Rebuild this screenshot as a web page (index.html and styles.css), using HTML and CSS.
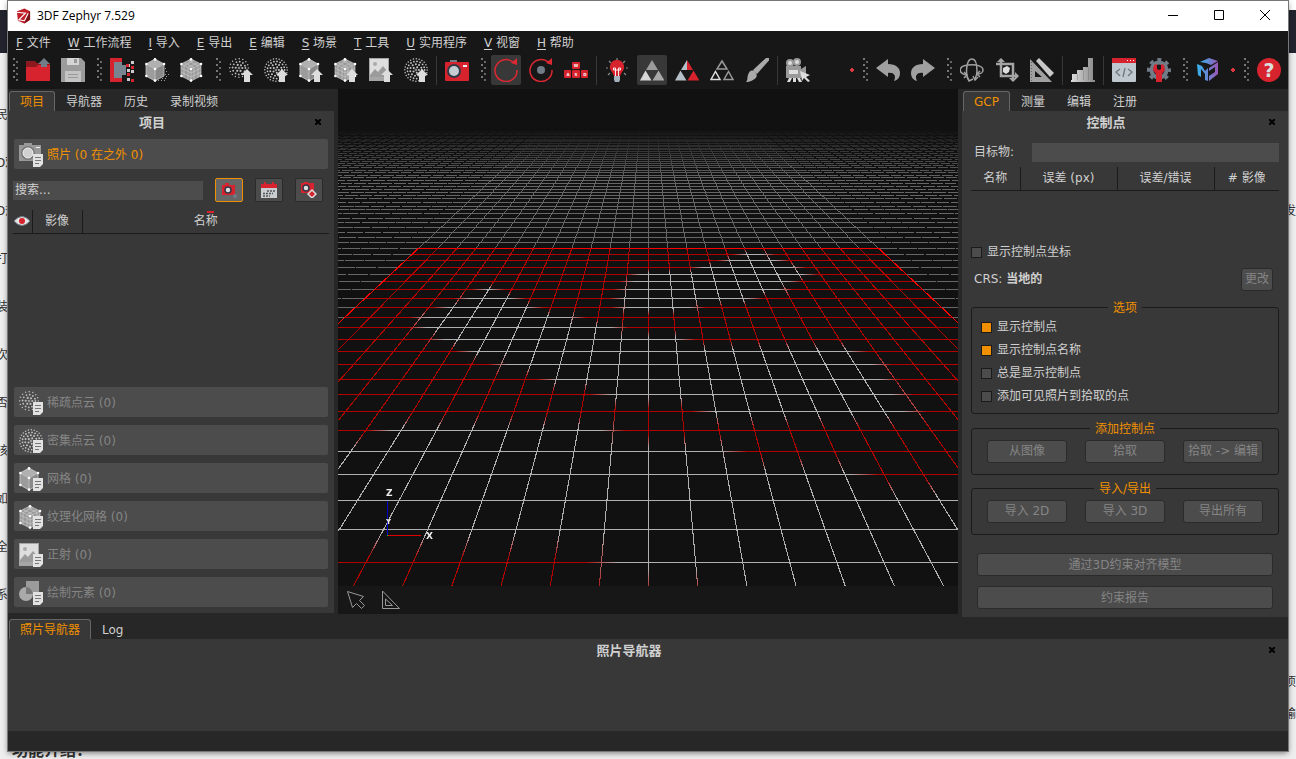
FILE: index.html
```html
<!DOCTYPE html>
<html lang="zh-CN">
<head>
    <meta charset="UTF-8">
    <meta name="viewport" content="width=device-width, initial-scale=1.0">
    <title>3DF Zephyr 7.529</title>
    <link rel="stylesheet" href="styles.css">
</head>
<body>
    <svg class="sprite" aria-hidden="true">
        <defs>
            <linearGradient id="mgrad" x1="0" x2="1"><stop offset="0" stop-color="#35b6ee"/><stop offset="1" stop-color="#9a55b5"/></linearGradient>
            <linearGradient id="steel" x1="0" x2="1"><stop offset="0" stop-color="#ddd"/><stop offset="1" stop-color="#888"/></linearGradient>
        </defs>
        <symbol id="up" viewBox="0 0 24 24"><path fill="#ddd" d="M18 11l6 6h-3v7h-6v-7h-3z"/></symbol>
        <symbol id="page" viewBox="0 0 24 24"><path fill="#e2e2e2" d="M14 11h10v10l-3 3h-7z"/><path stroke="#777" d="M16 14.5h6M16 17.500h6M16 20.500h4"/></symbol>
        <symbol id="folder" viewBox="0 0 24 24"><path fill="#8d1920" d="M0 3h9l2 2h13v7H0z"/><path fill="#d6232d" d="M0 9h10l2-2h12v16H0z"/><path fill="#727c88" d="M18 0l6 6h-3v3h-6V6h-3z"/></symbol>
        <symbol id="save" viewBox="0 0 24 24"><path fill="#9c9c9c" d="M0 0h20l4 4v20H0z"/><path fill="#d5d5d5" d="M6 0h12v7H6z"/><path fill="#c4c4c4" d="M4 13h16v11H4z"/><path fill="#999" d="M13 1h3v4h-3z"/><path stroke="#999" d="M7 16.500h10M7 19.500h10"/></symbol>
        <symbol id="split" viewBox="0 0 24 24"><path fill="#d6232d" d="M0 0h12v4H4v16h8v4H0z"/><path fill="#788490" d="M4 4h8v3h4v10h-4v3H4z"/><path fill="#ccc" d="M17 6h3v3h-3zM21 3h3v3h-3zM17 11h3v3h-3zM21 12h3v3h-3zM17 20h3v3h-3z"/><path fill="#d6232d" d="M16 6h3v3h-3zM21 8h3v3h-3zM17 15h3v3h-3zM21 21h3v3h-3z"/></symbol>
        <symbol id="cube" viewBox="0 0 24 24"><path fill="#b0b0b0" d="M10 1l9 5-9 5-9-5z"/><path fill="#9c9c9c" d="M1 6l9 5v12l-9-5z"/><path fill="#8a8a8a" d="M19 6l-9 5v12l9-5z"/><path fill="none" stroke="#c8c8c8" stroke-width=".8" d="M10 1l9 5v12l-9 5-9-5V6zM1 6l9 5 9-5M10 11v12"/><g fill="#fff"><circle cx="10" cy="1.400" r="1.300"/><circle cx="1.400" cy="6" r="1.300"/><circle cx="19" cy="6" r="1.300"/><circle cx="10" cy="11" r="1.300"/><circle cx="1.400" cy="18" r="1.300"/><circle cx="10" cy="22.600" r="1.300"/></g></symbol>
        <symbol id="dust" viewBox="0 0 24 24"><path stroke="#999" stroke-dasharray="1 2" d="M20 10.500h3M18 13.500h6M17 16.500h7M15 18.500h9M14 20.500h9M13 22.500h8"/></symbol>
        <symbol id="texcube" viewBox="0 0 24 24"><path fill="#999" d="M11 1l10 5v12l-10 5-10-5V6z"/><path fill="none" stroke="#c8c8c8" stroke-width=".7" d="M11 1l10 5v12l-10 5-10-5V6zM1 6l10 5 10-5M11 11v12M1 10l10 5 10-5M1 14l10 5 10-5M4 4.500l10 5v12M8 2.500l10 5v12M18 4.500l-10 5v12M14 2.500l-10 5v12"/><g fill="#fff"><circle cx="11" cy="1.400" r="1.400"/><circle cx="1.400" cy="6" r="1.300"/><circle cx="21" cy="6" r="1.300"/><circle cx="11" cy="11" r="1.300"/><circle cx="1.400" cy="18" r="1.300"/><circle cx="21" cy="18" r="1.300"/><circle cx="11" cy="22.600" r="1.300"/></g></symbol>
        <symbol id="sparse" viewBox="0 0 24 24"><g fill="none" stroke="#bbb" stroke-linecap="round"><circle cx="10" cy="10" r="9.300" stroke-width="1.500" stroke-dasharray="0 3.650"/><circle cx="10" cy="10" r="6.400" stroke-width="1.900" stroke-dasharray="0 3.350"/><circle cx="10" cy="10" r="3.300" stroke-width="2.200" stroke-dasharray="0 3.450"/><circle cx="10" cy="10" r=".3" stroke-width="2"/></g></symbol>
        <symbol id="dense" viewBox="0 0 24 24"><g fill="none" stroke="#c4c4c4" stroke-linecap="round"><circle cx="12" cy="12" r="11.200" stroke-width="1.500" stroke-dasharray="0 2.930"/><circle cx="12" cy="12" r="8.600" stroke-width="1.800" stroke-dasharray="0 3.180"/><circle cx="12" cy="12" r="5.800" stroke-width="2" stroke-dasharray="0 3.310"/><circle cx="12" cy="12" r="2.900" stroke-width="2.100" stroke-dasharray="0 3.640"/><circle cx="12" cy="12" r=".3" stroke-width="2"/></g></symbol>
        <symbol id="image" viewBox="0 0 24 24"><path fill="#a6a6a6" d="M0 0h20v23H0z"/><path fill="#dedede" d="M1 1h18v16H1z"/><circle cx="6" cy="6" r="2" fill="#aaa"/><path fill="#9b9b9b" d="M1 17l5-6 3 3 5-6 5 6v5H1z"/></symbol>
        <symbol id="camera" viewBox="0 0 24 24"><path fill="#727c88" d="M5 2h7v3H5z"/><rect y="4" width="24" height="19" rx="1" fill="#d6232d"/><path fill="#eee" d="M18 7h4v2h-4z"/><circle cx="9" cy="13" r="7" fill="#313947"/><circle cx="9" cy="13" r="5" fill="#c5cdd3"/></symbol>
        <symbol id="graycamera" viewBox="0 0 24 24"><path fill="#999" d="M5 0h8v2h9v16H0V2h5z"/><path fill="#eee" d="M17 4h4v1h-4z"/><circle cx="9" cy="10" r="7" fill="#777"/><circle cx="9" cy="10" r="5" fill="#d0d0d0" stroke="#f0f0f0"/></symbol>
        <symbol id="orbit" viewBox="0 0 24 24"><path fill="none" stroke="#dc2832" stroke-width="1.500" d="M20 5A11 11 0 1 0 23 12"/><path fill="#dc2832" d="M23 0v7l-6-2z"/></symbol>
        <symbol id="wasd" viewBox="0 0 24 24"><g fill="#d6232d"><rect x="8" y="4" width="8" height="7" rx="1"/><rect y="12" width="7" height="8" rx="1"/><rect x="8" y="12" width="8" height="8" rx="1"/><rect x="17" y="12" width="7" height="8" rx="1"/></g><g fill="#fff" font-family="DejaVu Sans" font-size="4" font-weight="bold" text-anchor="middle"><text x="12" y="9">W</text><text x="4" y="18">A</text><text x="12" y="18">S</text><text x="21" y="18">D</text></g></symbol>
        <symbol id="bulb" viewBox="0 0 24 24"><path stroke="#888" stroke-width="1.200" d="M12 0v2M4 3l2 2M20 3l-2 2M1 10h2M21 10h2M3 17l2-2M21 17l-2-2"/><path fill="#d6232d" d="M12 2a7 7 0 0 0-5 12l2 4h6l2-4a7 7 0 0 0-5-12z"/><path fill="none" stroke="#fff" stroke-width=".9" d="M10.500 18v-8h-2v2h7v-2h-2v8"/><path fill="#a5b1bc" d="M9 18h6v4l-1 2h-4l-1-2z"/></symbol>
        <symbol id="tri" viewBox="0 0 24 24"><path fill="#9b9b9b" d="M12 2l6 10H6z"/><path fill="#d8d8d8" d="M5.500 12.500l6 10H0z"/><path fill="#a8a8a8" d="M18.500 12.500l6 10h-12z"/></symbol>
        <symbol id="tricolor" viewBox="0 0 24 24"><path fill="#b5bfc7" d="M12 2v10H6zM5.500 12.500l6 10H0z"/><path fill="#d6232d" d="M12 2l6 10h-6zM18.500 12.500l6 10h-12z"/></symbol>
        <symbol id="triline" viewBox="0 0 24 24"><g fill="none" stroke-width="1.500"><path stroke="#999" d="M12 3l5 8H7zM18.500 13.500l4.500 8h-9z"/><path stroke="#ddd" d="M5.500 13.500l4.500 8H1z"/></g></symbol>
        <symbol id="brush" viewBox="0 0 24 24"><path fill="#aaa" d="M21 0l3-.1v2.500L12 16l-4-4zM1 24c2-2 1-4 2-7 1-4 4-6 7-3 3 3 2 6-2 8s-5 2-7 2z"/></symbol>
        <symbol id="movie" viewBox="0 0 24 24"><g fill="#999"><circle cx="4" cy="5" r="4"/><circle cx="11" cy="4" r="4"/><path d="M0 8h15v3l5-3v11l-5-3v4H0z"/></g><path fill="#ddd" d="M3 12h9v4H3zM3 20h3l-2 4H1zM7 20h3v4H7zM11 20h3l2 4h-3z"/><path fill="#ddd" d="M14 13l10 4-4 2 4 4-2 1-4-4-2 3z"/><circle cx="4" cy="5" r="2" fill="#ddd"/><circle cx="11" cy="4" r="2" fill="#ddd"/></symbol>
        <symbol id="undo" viewBox="0 0 24 24"><path fill="#a0a0a0" d="M0 10L12 1v5c8 0 12 4 12 9 0 4-2 7-6 8 3-6-1-9-6-8v4z"/></symbol>
        <symbol id="orbit3d" viewBox="0 0 24 24"><g fill="none" stroke="#a2a2a2" stroke-width="1.500"><path d="M6 17C-2 15-2 8 8 7c8-1 15 1 15 5 0 2-2 4-5 4M9 22C5 17 6 1 12 1c4 0 5 5 5 12 0 3-1 6-2 8"/><path d="M4 14l3 3-3 3M7 19l2 4 4-2M20 13l-3 3 3 3M13 18l2 4 3-3"/></g></symbol>
        <symbol id="crop" viewBox="0 0 24 24"><path fill="none" stroke="#a5a5a5" stroke-width="2.500" d="M6 1v17h17M1 6h17v17"/><path fill="#a5a5a5" d="M6 0l4 4H2zM24 18l-4 4v-8zM18 24l-4-4h8z"/><path fill="#ddd" d="M8 10l4-2 3 2-1 4-3 2-3-2z"/></symbol>
        <symbol id="rulers" viewBox="0 0 24 24"><path fill="#a0a0a0" fill-rule="evenodd" d="M0 1l22 23H0zM5 13v6h7z"/><path fill="#c8c8c8" d="M9 0l15 15-4 4L6 3z"/><path stroke="#666" stroke-dasharray="1 2" d="M1.500 4v19"/></symbol>
        <symbol id="stairs" viewBox="0 0 24 24"><path fill="url(#steel)" d="M0 24v-2h1v-6h5v-4h6V9h5V0h5v22h2v2z"/><path fill="#555" d="M6 16h1v6H6zM12 12h1v10h-1zM17 9h1v13h-1z" opacity=".3"/></symbol>
        <symbol id="code" viewBox="0 0 24 24"><rect width="24" height="24" rx="1" fill="#c0c8cf"/><path fill="#d6232d" d="M0 0h24v5H0z"/><path fill="#fff" d="M15 2h1v1h-1zM18 2h1v1h-1zM21 2h1v1h-1z"/><path fill="none" stroke="#6d7782" stroke-width="1.300" d="M8 11l-4 3 4 4M16 11l4 3-4 4M13 10l-2 9"/></symbol>
        <symbol id="gear" viewBox="0 0 24 24"><circle cx="12" cy="12" r="7.500" fill="none" stroke="#727c88" stroke-width="4"/><circle cx="12" cy="12" r="10.500" fill="none" stroke="#727c88" stroke-width="3" stroke-dasharray="4.100 4.140" stroke-dashoffset="2"/><path fill="#d6232d" d="M7 7l3-1v5l2 1 2-1V6l3 1 1 5-3 4v8H9v-8l-3-4z"/></symbol>
        <symbol id="mcube" viewBox="0 0 24 24"><g fill="url(#mgrad)"><path d="M4 4l9-4 9 3-7 4-5-2z"/><path fill-rule="evenodd" d="M1 6l5 2 3 5 3-3v13l-3-1v-6l-4-5v8l-3-2zM13 10l9-6v12l-9 7v-5l6-4V9l-6 4z"/></g></symbol>
        <symbol id="help" viewBox="0 0 24 24"><circle cx="12" cy="12" r="12" fill="#d6232d"/><text x="12" y="19" fill="#ddd" font-family="DejaVu Sans" font-size="19" font-weight="bold" text-anchor="middle">?</text></symbol>
        <symbol id="shapes" viewBox="0 0 24 24"><path fill="#9b9b9b" d="M7 0h13v14H7z"/><circle cx="7" cy="13" r="7" fill="#aaa"/><path fill="#777" d="M7 6c4 0 6 3 7 7H7z"/></symbol>
    </svg>

    <!-- page showing around the window edges -->
    <div class="backdrop">
        <div class="behind-left"><span>民</span><span>D观</span><span>D规</span><span>打</span><span>装</span><span>次</span><span>否</span><span>核</span><span>如</span><span>全</span><span>系</span></div>
        <div class="behind-right"><span class="r1">发</span><span class="r2">项</span><span class="r3">输</span></div>
        <strong class="behind-title">功能介绍：</strong>
    </div>

    <div class="window">
        <header class="titlebar">
            <svg class="logo" viewBox="0 0 16 16"><path fill="#c01e29" d="M1 3l8-3 6 3v9l-6 4-7-3z"/><path fill="#7c1219" d="M13 5l2-2v9l-6 4z"/><path fill="none" stroke="#fff" stroke-width="1.200" d="M1 4l9 1-7 7 6 1 4-8"/></svg>
            <span>3DF Zephyr 7.529</span>
            <div class="window-buttons">
                <button aria-label="最小化"><svg viewBox="0 0 10 10"><path d="M0 5.500h10"/></svg></button>
                <button aria-label="最大化"><svg viewBox="0 0 10 10"><path d="M.5.5h9v9h-9z"/></svg></button>
                <button aria-label="关闭"><svg viewBox="0 0 10 10"><path d="M0 0l10 10M10 0L0 10"/></svg></button>
            </div>
        </header>

        <nav class="menubar">
            <button><u>F</u> 文件</button>
            <button><u>W</u> 工作流程</button>
            <button><u>I</u> 导入</button>
            <button><u>E</u> 导出</button>
            <button><u>E</u> 编辑</button>
            <button><u>S</u> 场景</button>
            <button><u>T</u> 工具</button>
            <button><u>U</u> 实用程序</button>
            <button><u>V</u> 视窗</button>
            <button><u>H</u> 帮助</button>
        </nav>

        <div class="toolbar">
            <i class="handle"></i>
            <button><svg><use href="#folder"/></svg></button>
            <button><svg><use href="#save"/></svg></button>
            <i class="handle"></i>
            <button><svg><use href="#split"/></svg></button>
            <button><svg><use href="#cube"/><use href="#dust"/></svg></button>
            <button><svg><use href="#texcube"/></svg></button>
            <i class="handle"></i>
            <button><svg><use href="#sparse"/><use href="#up"/></svg></button>
            <button><svg><use href="#dense"/><use href="#up"/></svg></button>
            <button><svg><use href="#cube"/><use href="#up"/></svg></button>
            <button><svg><use href="#texcube"/><use href="#up"/></svg></button>
            <button><svg><use href="#image"/><use href="#up"/></svg></button>
            <button><svg><use href="#dense"/><use href="#up"/></svg></button>
            <i class="sep"></i>
            <button><svg><use href="#camera"/></svg></button>
            <i class="handle"></i>
            <button class="active"><svg><use href="#orbit"/></svg></button>
            <button><svg viewBox="0 0 24 24"><use href="#orbit"/><circle cx="12" cy="12" r="4" fill="#727c88"/></svg></button>
            <button><svg><use href="#wasd"/></svg></button>
            <i class="sep"></i>
            <button><svg><use href="#bulb"/></svg></button>
            <button class="active"><svg><use href="#tri"/></svg></button>
            <button><svg><use href="#tricolor"/></svg></button>
            <button><svg><use href="#triline"/></svg></button>
            <button><svg><use href="#brush"/></svg></button>
            <i class="sep"></i>
            <button><svg><use href="#movie"/></svg></button>
            <i class="dot far"></i>
            <i class="handle"></i>
            <button><svg><use href="#undo"/></svg></button>
            <button><svg class="flip"><use href="#undo"/></svg></button>
            <i class="handle"></i>
            <button><svg><use href="#orbit3d"/></svg></button>
            <button><svg><use href="#crop"/></svg></button>
            <button><svg><use href="#rulers"/></svg></button>
            <i class="sep"></i>
            <button><svg><use href="#stairs"/></svg></button>
            <i class="sep"></i>
            <button><svg><use href="#code"/></svg></button>
            <button><svg><use href="#gear"/></svg></button>
            <i class="handle"></i>
            <button><svg><use href="#mcube"/></svg></button>
            <i class="dot"></i>
            <i class="handle"></i>
            <button><svg><use href="#help"/></svg></button>
        </div>

        <main class="main">
            <section class="dock project">
                <div class="tabs"><button class="on">项目</button><button>导航器</button><button>历史</button><button>录制视频</button></div>
                <div class="panel">
                    <div class="panel-head"><h2>项目</h2><button class="close" aria-label="关闭"><svg viewBox="0 0 6 6"><path d="M0 0l6 6M6 0L0 6"/></svg></button></div>
                    <button class="item current"><svg><use href="#graycamera"/><use href="#page"/></svg>照片 (0 在之外 0)</button>
                    <div class="search">
                        <input type="text" placeholder="搜索..." aria-label="搜索">
                        <button class="on"><svg viewBox="0 0 16 16"><path fill="#d6232d" d="M1 3h3V1h4v2h6v10H1z"/><circle cx="7" cy="8" r="3" fill="#ddd" stroke="#313947" stroke-width="1.500"/><circle cx="14" cy="14" r="2" fill="#727c88"/></svg></button>
                        <button><svg viewBox="0 0 16 16"><path fill="#c8cdd2" d="M0 2h16v14H0z"/><path fill="#d6232d" d="M0 2h3V0h2v2h6V0h2v2h3v4H0z"/><path stroke="#555" stroke-width="1.500" stroke-dasharray="2 1" d="M6 9h8M2 11.500h10M2 14h7"/></svg></button>
                        <button><svg viewBox="0 0 16 16"><path fill="#d6232d" d="M0 1h3V0h4v1h6v10H0z"/><circle cx="5" cy="6" r="3" fill="#ddd" stroke="#313947" stroke-width="1.500"/><path fill="#d6232d" stroke="#ddd" stroke-width="1.500" d="M11 8l4 4-4 4-4-4z"/></svg></button>
                    </div>
                    <table class="list photos">
                        <thead><tr>
                            <th><svg class="eye" viewBox="0 0 16 10"><path fill="#e4e4e4" stroke="#727c88" d="M0 5q8-9 16 0-8 9-16 0z"/><circle cx="8" cy="5" r="3" fill="#d6232d"/></svg></th>
                            <th>影像</th>
                            <th class="sorted">名称</th>
                        </tr></thead>
                    </table>
                    <div class="items">
                        <button class="item" disabled><svg><use href="#sparse"/><use href="#page"/></svg>稀疏点云 (0)</button>
                        <button class="item" disabled><svg><use href="#dense"/><use href="#page"/></svg>密集点云 (0)</button>
                        <button class="item" disabled><svg><use href="#cube"/><use href="#page"/></svg>网格 (0)</button>
                        <button class="item" disabled><svg><use href="#texcube"/><use href="#page"/></svg>纹理化网格 (0)</button>
                        <button class="item" disabled><svg><use href="#image"/><use href="#page"/></svg>正射 (0)</button>
                        <button class="item" disabled><svg><use href="#shapes"/><use href="#page"/></svg>绘制元素 (0)</button>
                    </div>
                </div>
            </section>

            <section class="viewport">
                <div class="scene">
                    <canvas id="grid"></canvas>
                    <svg class="axes" viewBox="0 0 60 60"><path stroke="#00c" d="M10.500 14v34"/><path stroke="#e00000" d="M10 48.500h34"/><path fill="#0c0" d="M10 48h1v1h-1z"/><text x="9" y="9">Z</text><text class="small" x="9" y="37">Y</text><text x="49" y="52">X</text></svg>
                </div>
                <div class="viewtools">
                    <button aria-label="选择"><svg viewBox="0 0 20 20"><path d="M1.500 1.500l16 5-4 4 5 5-3 3-5-5-4 4z"/></svg></button>
                    <button aria-label="测量"><svg viewBox="0 0 20 20"><path d="M1.500 1l17 17.500h-17zM4.500 9v6.500h7z"/></svg></button>
                </div>
            </section>

            <section class="dock control">
                <div class="tabs"><button class="on">GCP</button><button>测量</button><button>编辑</button><button>注册</button></div>
                <div class="panel">
                    <div class="panel-head"><h2>控制点</h2><button class="close" aria-label="关闭"><svg viewBox="0 0 6 6"><path d="M0 0l6 6M6 0L0 6"/></svg></button></div>
                    <div class="target"><label for="target">目标物:</label><input type="text" id="target"></div>
                    <table class="list points">
                        <thead><tr><th>名称</th><th>误差 (px)</th><th>误差/错误</th><th># 影像</th></tr></thead>
                    </table>
                    <label class="check coords"><input type="checkbox">显示控制点坐标</label>
                    <div class="crs"><span>CRS: <b>当地的</b></span><button class="btn" disabled>更改</button></div>
                    <fieldset class="options">
                        <legend>选项</legend>
                        <label class="check"><input type="checkbox" checked>显示控制点</label>
                        <label class="check"><input type="checkbox" checked>显示控制点名称</label>
                        <label class="check"><input type="checkbox">总是显示控制点</label>
                        <label class="check"><input type="checkbox">添加可见照片到拾取的点</label>
                    </fieldset>
                    <fieldset>
                        <legend>添加控制点</legend>
                        <div class="row"><button class="btn" disabled>从图像</button><button class="btn" disabled>拾取</button><button class="btn" disabled>拾取 -&gt; 编辑</button></div>
                    </fieldset>
                    <fieldset>
                        <legend>导入/导出</legend>
                        <div class="row"><button class="btn" disabled>导入 2D</button><button class="btn" disabled>导入 3D</button><button class="btn" disabled>导出所有</button></div>
                    </fieldset>
                    <div class="wide">
                        <button class="btn" disabled>通过3D约束对齐模型</button>
                        <button class="btn" disabled>约束报告</button>
                    </div>
                </div>
            </section>
        </main>

        <section class="dock bottom">
            <div class="tabs"><button class="on">照片导航器</button><button>Log</button></div>
            <div class="panel">
                <div class="panel-head"><h2>照片导航器</h2><button class="close" aria-label="关闭"><svg viewBox="0 0 6 6"><path d="M0 0l6 6M6 0L0 6"/></svg></button></div>
            </div>
        </section>
        <footer class="statusbar"></footer>
    </div>
    <script src="grid.js"></script>
</body>
</html>
```

FILE: styles.css
```css
* {
    box-sizing: border-box;
}
body {
    margin: 0;
    height: 100vh;
    padding: 1px 8px 8px;
    overflow: hidden;
    background: #efefef;
    font-family: "DejaVu Sans", "Noto Sans CJK SC", sans-serif;
    font-size: 12px;
    line-height: 16px;
    color: #d0d0d0;
}
button, input {
    font: inherit;
    color: inherit;
}
button {
    margin: 0;
    padding: 0;
    border: 0;
    background: none;
}
.sprite {
    position: absolute;
    width: 0;
    height: 0;
}

/* page behind the window */
.backdrop {
    position: absolute;
    inset: 0;
    overflow: hidden;
    color: #333;
    background: linear-gradient(#fff 10px, #22252e 10px, #22252e 53px, #efefef 53px);
}
.behind-left {
    width: 8px;
    padding-top: 91px;
    overflow: hidden;
    text-indent: -4px;
}
.behind-left span {
    display: block;
    line-height: 48px;
    white-space: nowrap;
}
.behind-right span {
    position: absolute;
    right: 0;
}
.behind-right .r1 { top: 203px; }
.behind-right .r2 { top: 674px; }
.behind-right .r3 { top: 706px; }
.behind-title {
    position: absolute;
    left: 12px;
    bottom: 0;
    font-size: 16px;
}

.window {
    position: relative;
    display: flex;
    flex-direction: column;
    height: 100%;
    background: #272727;
    box-shadow: 0 0 0 1px #777, 0 2px 6px rgba(0,0,0,0.5);
}
.titlebar {
    display: flex;
    align-items: center;
    gap: 6px;
    height: 30px;
    padding-left: 8px;
    background: #fff;
    color: #000;
    font-family: "Open Sans", sans-serif;
}
.logo {
    width: 15px;
    height: 16px;
}
.window-buttons {
    display: flex;
    margin-left: auto;
}
.window-buttons button {
    width: 46px;
    height: 30px;
}
.window-buttons svg {
    width: 10px;
    height: 10px;
    fill: none;
    stroke: #000;
}
.menubar {
    display: flex;
    gap: 17px;
    height: 22px;
    padding: 1px 0 0 8px;
    background: #171717;
}
.menubar u {
    text-underline-offset: 2px;
}
.toolbar {
    display: flex;
    align-items: center;
    gap: 5px;
    height: 36px;
    padding: 0 0 2px 1px;
    background: #171717;
}
.toolbar button {
    display: flex;
    align-items: center;
    justify-content: center;
    flex: none;
    width: 30px;
    height: 30px;
    border-radius: 2px;
}
.toolbar .active {
    background: #383838;
}
.toolbar svg, .item svg {
    width: 24px;
    height: 24px;
}
.flip {
    transform: scaleX(-1);
}
.handle {
    flex: none;
    width: 9px;
    height: 24px;
    background:
        radial-gradient(circle at 5px 1px, #777 1px, transparent 1px),
        radial-gradient(circle at 8px 4px, #666 1px, transparent 1px);
    background-size: 9px 6px;
}
.sep {
    flex: none;
    width: 1px;
    height: 29px;
    background: #383838;
}
.dot {
    flex: none;
    width: 7px;
    height: 4px;
    background: radial-gradient(circle at 5px 2px, #dc3a42 2px, transparent 2px);
}
.dot.far {
    margin-left: 29px;
}

.main {
    display: flex;
    flex: 1;
    gap: 4px;
    min-height: 0;
}
.dock {
    display: flex;
    flex-direction: column;
}
.project, .control {
    flex: none;
    width: 326px;
}
.project {
    padding-bottom: 5px;
}
.control {
    padding-bottom: 1px;
}
.tabs {
    display: flex;
    flex: none;
    height: 22px;
    padding: 2px 0 0 1px;
}
.bottom .tabs {
    height: 21px;
    padding-top: 1px;
}
.tabs button {
    padding: 1px 10px 0;
    border: 1px solid transparent;
    border-bottom: 0;
}
.tabs .on {
    border-color: #666;
    border-radius: 3px 3px 0 0;
    background: #383838;
    color: #f09000;
}
.panel {
    display: flex;
    flex-direction: column;
    flex: 1;
    background: #383838;
}
.panel-head {
    display: flex;
    flex: none;
    height: 24px;
}
.panel-head h2 {
    flex: 1;
    margin: 0;
    padding-left: 2px;
    font-size: 13px;
    line-height: 24px;
    text-align: center;
}
.close {
    display: flex;
    width: 40px;
    padding: 8px 0 0 21px;
}
.close svg {
    flex: none;
    width: 6px;
    height: 6px;
    stroke: #000;
    stroke-width: 2;
}

.item {
    display: flex;
    flex: none;
    align-items: center;
    gap: 4px;
    height: 30px;
    padding: 1px 5px 0;
    border-radius: 2px;
    background: #4c4c4c;
}
.item:disabled {
    color: #858585;
}
.item.current {
    margin: 4px 6px 9px;
    color: #f09000;
}
.items {
    display: flex;
    flex-direction: column;
    gap: 8px;
    margin: auto 6px 6px;
}
.search {
    display: flex;
    align-items: center;
    gap: 12px;
    height: 24px;
    padding: 0 11px 0 5px;
}
.search input {
    flex: 1;
    min-width: 0;
    height: 19px;
    padding: 0 2px;
    border: 0;
    background: #4c4c4c;
}
::placeholder {
    color: #d0d0d0;
}
.search button {
    display: flex;
    align-items: center;
    justify-content: center;
    width: 28px;
    height: 24px;
    border: 1px solid #2b2b2b;
    border-radius: 2px;
    background: #4c4c4c;
}
.search .on {
    border-color: #f09000;
    background: #666;
}
.search svg {
    width: 16px;
    height: 16px;
}
.list {
    table-layout: fixed;
    border-collapse: collapse;
    border-bottom: 1px solid #1b1b1b;
}
.list th {
    height: 23px;
    padding: 0;
    border-right: 1px solid #1b1b1b;
    font-weight: normal;
}
.list th:last-child {
    border-right: 0;
}
.photos {
    margin: 8px 5px 0;
}
.photos th:nth-child(1) { width: 19px; }
.photos th:nth-child(2) { width: 50px; }
.sorted {
    background: linear-gradient(#d6232d, #d6232d) 52% 1px / 7px 2px no-repeat;
}
.eye {
    display: block;
    width: 16px;
    height: 10px;
    margin: auto;
}

.viewport {
    display: flex;
    flex-direction: column;
    flex: 1;
    min-width: 0;
    padding-bottom: 4px;
}
.scene {
    position: relative;
    flex: 1;
    min-height: 0;
    background: #111;
}
#grid {
    position: absolute;
    width: 100%;
    height: 100%;
}
.axes {
    position: absolute;
    left: 39px;
    bottom: 39px;
    width: 60px;
    height: 60px;
    fill: #eee;
    font-size: 9px;
    font-weight: bold;
}
.axes .small {
    font-size: 7px;
}
.viewtools {
    display: flex;
    gap: 15px;
    height: 28px;
    padding: 4px 8px;
    background: #171717;
}
.viewtools svg {
    display: block;
    width: 20px;
    height: 20px;
    fill: none;
    stroke: #999;
}

.target {
    display: flex;
    align-items: center;
    height: 20px;
    margin: 7px 9px 5px 12px;
}
.target label {
    width: 58px;
}
.target input {
    flex: 1;
    min-width: 0;
    height: 19px;
    border: 0;
    background: #4c4c4c;
}
.points {
    margin: 0 9px;
}
.points th:nth-child(1) { width: 49px; }
.points th:nth-child(2), .points th:nth-child(3) { width: 97px; }
.check {
    display: flex;
    align-items: center;
    gap: 5px;
    height: 23px;
}
.check input {
    appearance: none;
    width: 11px;
    height: 11px;
    margin: 0;
    border: 1px solid #1b1b1b;
    background: #4c4c4c;
}
.check input:checked {
    background: #f09000;
}
.coords {
    margin: 50px 9px 4px;
}
.crs {
    display: flex;
    align-items: center;
    justify-content: space-between;
    margin: 0 15px 9px 12px;
}
.btn {
    height: 23px;
    padding: 0 3px;
    border: 1px solid #2b2b2b;
    border-radius: 3px;
    background: #4c4c4c;
    white-space: nowrap;
}
.btn:disabled {
    color: #858585;
}
fieldset {
    min-width: 0;
    margin: 0 9px 6px;
    padding: 3px 15px 11px;
    border: 1px solid #1b1b1b;
    border-radius: 3px;
}
fieldset.options {
    margin-bottom: 7px;
    padding: 0 9px 5px;
}
legend {
    margin: 0 auto;
    padding: 0 5px;
    color: #f09000;
}
.row {
    display: grid;
    grid-template-columns: repeat(3, 1fr);
    gap: 18px;
}
.wide {
    display: flex;
    flex-direction: column;
    gap: 10px;
    margin: auto 15px 8px;
}
.bottom {
    flex: none;
    height: 113px;
}
.statusbar {
    flex: none;
    height: 20px;
}
```

FILE: grid.js
```js
const canvas = document.getElementById('grid');
const ctx = canvas.getContext('2d');

// perspective of the ground plane
const HORIZON = -57;
const FAR = 0.004636;
const STEP = 0.000125;
const SPREAD = 0.0889;
const HALF = 12;

// white stretches of each row, in grid units from the centre line
const WHITE = [
    [], [[4.6, 6.1]], [[3.7, 6.6]], [[2.3, 7.2]], [[-0.7, 7.5]], [[-1, 6.6]],
    [[-7.4, -6.6], [-1.2, 6]], [[-7.9, -5.5], [-1.35, 4.5]], [[-8.5, -4.6], [-1.2, 2]],
    [[-9.1, -2.8]], [[-8.8, -1.1]], [[-7.8, 1.4]], [[-6.5, 7.4]], [[-5.1, 7.9]],
    [[-3.3, 7.8]], [[-1.5, 7.9]], [[1.6, 7.9]], [[-7.6, -1]], [[-99, 2.3]],
    [[-99, 5.5]], [[-99, 99]], [[-99, 99]], [[-1, 99]], [[1.3, 99]], [[1.3, 99]]
];

function rowY(j) {
    return HORIZON + 1 / (FAR - STEP * j);
}

function whiteness(i, j) {
    let w = 0;
    for (const [a, b] of WHITE[j]) {
        w = Math.max(w, Math.min(1, (i - a) / 0.7 + 0.5, (b - i) / 0.7 + 0.5));
    }
    return w;
}

function mix(w) {
    return `rgb(176, ${Math.round(176 * w)}, ${Math.round(176 * w)})`;
}

function gray(y) {
    const v = 17 + Math.round(85 * Math.max(0, Math.min(1, (y - 40) / 50)));
    return `rgb(${v}, ${v}, ${v})`;
}

function dot(x, y, color) {
    ctx.fillStyle = color;
    ctx.fillRect(Math.round(x), Math.round(y), 1, 1);
}

// lines running away from the viewer, one pixel per row or per column
function depthLine(i, from, to, cx, color, samples = 1) {
    const slope = Math.abs(i * SPREAD);
    const step = 1 / (Math.max(1, slope) * samples);
    for (let y = from; y < to; y += step) {
        const x = cx + i * SPREAD * (y - HORIZON);
        if (x >= 0 && x < canvas.width) {
            dot(x, y, color(y));
        }
    }
}

function draw() {
    canvas.width = canvas.clientWidth;
    canvas.height = canvas.clientHeight;
    const w = canvas.width;
    const h = canvas.height;
    const cx = Math.round(w / 2);
    const top = Math.round(rowY(0));

    ctx.fillStyle = '#111';
    ctx.fillRect(0, 0, w, h);

    // outer plane
    for (let j = -46; j < 10; j++) {
        const y = Math.round(rowY(j));
        ctx.fillStyle = gray(y);
        ctx.fillRect(0, y, w, 1);
    }
    for (let i = -80; i <= 80; i++) {
        if (Math.abs(i) > HALF) {
            depthLine(i, 40, h, cx, () => '#111');
        } else {
            depthLine(i, 40, top, cx, gray);
        }
    }

    // inner square
    for (let j = 0; j < 23; j++) {
        const y = Math.round(rowY(j));
        const s = SPREAD * (y - HORIZON);
        for (let x = Math.max(0, Math.round(cx - HALF * s)); x <= Math.min(w, cx + HALF * s); x++) {
            dot(x, y, j ? mix(whiteness((x - cx) / s, j)) : '#f00');
        }
    }
    for (let i = -HALF; i <= HALF; i++) {
        depthLine(i, top, h, cx, y => {
            if (Math.abs(i) === HALF) {
                return '#f00';
            }
            const r = Math.max(0, Math.min(23.9, (FAR - 1 / (y - HORIZON)) / STEP));
            const j = Math.floor(r);
            const f = Math.max(0, Math.min(1, (r - j - 0.5) * 1.5 + 0.5));
            return mix(whiteness(i, j) * (1 - f) + whiteness(i, j + 1) * f);
        }, 2);
    }
}

draw();
window.addEventListener('resize', draw);
```
